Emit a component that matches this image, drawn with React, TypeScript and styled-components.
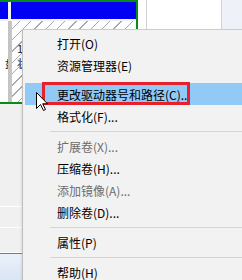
import React from "react";
import styled, { createGlobalStyle } from "styled-components";

const GlobalStyle = createGlobalStyle`
  html, body {
    margin: 0;
    padding: 0;
    background: #f0f0f0;
  }
  body {
    font-family: "Noto Sans CJK SC", "Noto Sans", sans-serif;
  }
`;

const Screen = styled.div`
  position: relative;
  width: 242px;
  height: 280px;
  overflow: hidden;
  background: #f0f0f0;
  display: flex;
  flex-direction: column;
`;

const DiskRow = styled.div`
  display: flex;
  height: 104px;
  background: #ffffff;
`;

const Selected = styled.div`
  display: flex;
  width: 138px;
  border-top: 2px solid #0a8a16;
  border-right: 2px solid #0a8a16;
  border-bottom: 2px solid #0a8a16;
  box-sizing: border-box;
`;

const Partition = styled.div<{ $width: number }>`
  display: flex;
  flex-direction: column;
  width: ${(p) => p.$width}px;
  flex-shrink: 0;
  overflow: hidden;
`;

const PartHeader = styled.div`
  height: 17px;
  background: #0000f4;
  border-bottom: 2px solid #f4f4f4;
`;

const PartBody = styled.div<{ $hatched?: boolean }>`
  flex: 1;
  padding: 20px 0 0 5px;
  font-size: 11px;
  line-height: 15px;
  color: #1a1a1a;
  white-space: nowrap;
  border-left: ${(p) => (p.$hatched ? "1px solid #c8c8c8" : "none")};
  background: ${(p) =>
    p.$hatched
      ? "repeating-linear-gradient(135deg, #ffffff 0 5px, #a8a8a8 5px 6px, #ffffff 6px 8px)"
      : "#ffffff"};
`;

const PartSpacer = styled.div`
  width: 3px;
  flex-shrink: 0;
  background: linear-gradient(#f4f4f4 0 19px, #c4c4c4 19px);
`;

const Blank = styled.div<{ $width?: number; $tint?: boolean }>`
  width: ${(p) => (p.$width ? `${p.$width}px` : "auto")};
  flex: ${(p) => (p.$width ? "none" : 1)};
  background: ${(p) => (p.$tint ? "#eef2f8" : "#ffffff")};
`;

const VLine = styled.div`
  width: 1px;
  background: #d2d2d2;
`;

const Lower = styled.div`
  flex: 1;
  display: flex;
  flex-direction: column;
`;

const LowerBand = styled.div<{ $height: number }>`
  height: ${(p) => p.$height}px;
  border-bottom: 1px solid #ffffff;
  background: #f0f0f0;
`;

const ListHead = styled.div`
  flex: 1;
  border-top: 1px solid #4a86c0;
  background: linear-gradient(#eaf1fa, #d9e6f4);
`;

const Menu = styled.div`
  position: absolute;
  left: 22px;
  top: 29px;
  width: 230px;
  padding: 2px 0;
  background: #f2f2f2;
  border-top: 1px solid #cccccc;
  border-left: 1px solid #bdbdbd;
  box-shadow: -1px 1px 2px rgba(0, 0, 0, 0.08);
`;

const Item = styled.div<{ $disabled?: boolean; $active?: boolean }>`
  position: relative;
  height: 22px;
  margin-left: 2px;
  padding-left: 32px;
  display: flex;
  align-items: center;
  font-size: 12px;
  color: ${(p) => (p.$disabled ? "#6d6d6d" : "#000000")};
  background: ${(p) => (p.$active ? "#91c9f7" : "transparent")};
  white-space: nowrap;
`;

const Separator = styled.div<{ $blank?: boolean }>`
  height: ${(p) => (p.$blank ? 7 : 8)}px;
  display: flex;
  align-items: center;
  padding-left: 27px;

  &::after {
    content: "";
    flex: 1;
    height: 1px;
    background: ${(p) => (p.$blank ? "transparent" : "#d5d5d5")};
  }
`;

const Callout = styled.div`
  position: absolute;
  left: 17px;
  top: -1px;
  width: 148px;
  height: 23px;
  box-sizing: border-box;
  border: 3px solid #e8202c;
  pointer-events: none;
`;

const Cursor = styled.svg`
  position: absolute;
  left: 36px;
  top: 92px;
`;

type Entry =
  | { kind: "item"; label: string; disabled?: boolean; active?: boolean }
  | { kind: "sep"; blank?: boolean };

const entries: Entry[] = [
  { kind: "item", label: "打开(O)" },
  { kind: "item", label: "资源管理器(E)" },
  { kind: "sep", blank: true },
  { kind: "item", label: "更改驱动器号和路径(C)...", active: true },
  { kind: "item", label: "格式化(F)..." },
  { kind: "sep" },
  { kind: "item", label: "扩展卷(X)...", disabled: true },
  { kind: "item", label: "压缩卷(H)..." },
  { kind: "item", label: "添加镜像(A)...", disabled: true },
  { kind: "item", label: "删除卷(D)..." },
  { kind: "sep" },
  { kind: "item", label: "属性(P)" },
  { kind: "sep" },
  { kind: "item", label: "帮助(H)" },
];

const App: React.FC = () => {
  return (
    <>
      <GlobalStyle />
      <Screen>
        <DiskRow>
          <Selected>
            <Partition $width={8}>
              <PartHeader />
              <PartBody>
                <br />
                盘
              </PartBody>
            </Partition>
            <PartSpacer />
            <Partition $width={125}>
              <PartHeader />
              <PartBody $hatched>
                1.00 GB
                <br />
                状态良好
              </PartBody>
            </Partition>
          </Selected>
          <Blank $width={8} />
          <VLine />
          <Blank $width={74} />
          <VLine />
          <Blank $tint />
        </DiskRow>
        <Lower>
          <LowerBand $height={102} />
          <LowerBand $height={20} />
          <LowerBand $height={24} />
          <ListHead />
        </Lower>

        <Menu>
          {entries.map((e, i) =>
            e.kind === "sep" ? (
              <Separator key={i} $blank={e.blank} />
            ) : (
              <Item key={i} $disabled={e.disabled} $active={e.active}>
                {e.label}
                {e.active && <Callout />}
              </Item>
            ),
          )}
        </Menu>

        <Cursor width="13" height="20" viewBox="0 0 13 20">
          <path
            d="M0.5 0.5 L0.5 16.5 L4.5 12.5 L7.5 18.5 L9.5 17.5 L6.7 11.8 L11.5 11.8 Z"
            fill="#ffffff"
            stroke="#000000"
            strokeWidth="1"
            strokeLinejoin="round"
          />
        </Cursor>
      </Screen>
    </>
  );
};

export default App;
